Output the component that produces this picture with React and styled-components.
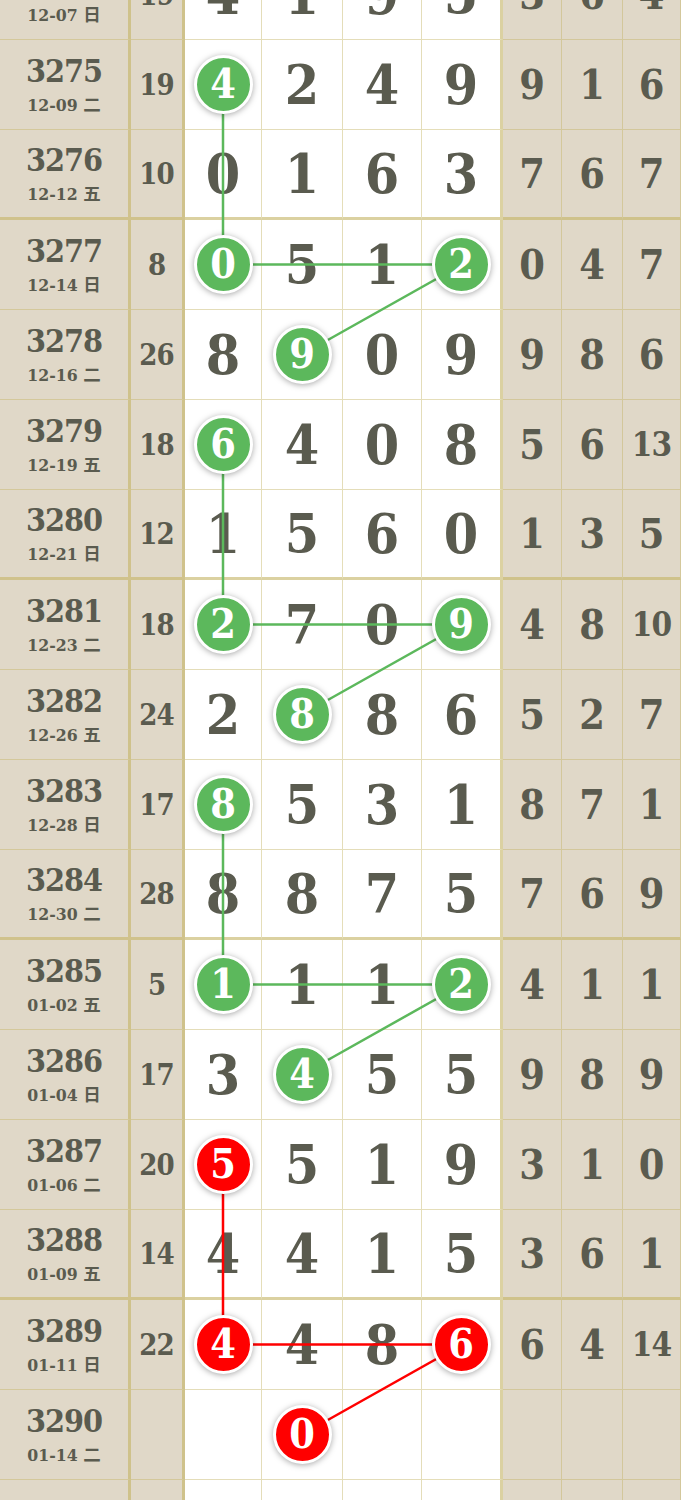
import React from "react";
import styled, {createGlobalStyle} from "styled-components";

const GlobalStyle = createGlobalStyle`
  body {
    margin: 0;
    background: #fff;
    overflow: hidden;
  }
`;

// column widths, border included
const COLS = [131, 54, 77, 81, 79, 81, 59, 61, 58];
const ROW_H = 90;

const rows = [
    {no: "3274", date: "12-07 日", sum: 19, nums: [4, 1, 9, 5], tail: [3, 6, 4]},
    {no: "3275", date: "12-09 二", sum: 19, nums: [4, 2, 4, 9], tail: [9, 1, 6], hit: [0]},
    {no: "3276", date: "12-12 五", sum: 10, nums: [0, 1, 6, 3], tail: [7, 6, 7]},
    {no: "3277", date: "12-14 日", sum: 8, nums: [0, 5, 1, 2], tail: [0, 4, 7], hit: [0, 3]},
    {no: "3278", date: "12-16 二", sum: 26, nums: [8, 9, 0, 9], tail: [9, 8, 6], hit: [1]},
    {no: "3279", date: "12-19 五", sum: 18, nums: [6, 4, 0, 8], tail: [5, 6, 13], hit: [0]},
    {no: "3280", date: "12-21 日", sum: 12, nums: [1, 5, 6, 0], tail: [1, 3, 5]},
    {no: "3281", date: "12-23 二", sum: 18, nums: [2, 7, 0, 9], tail: [4, 8, 10], hit: [0, 3]},
    {no: "3282", date: "12-26 五", sum: 24, nums: [2, 8, 8, 6], tail: [5, 2, 7], hit: [1]},
    {no: "3283", date: "12-28 日", sum: 17, nums: [8, 5, 3, 1], tail: [8, 7, 1], hit: [0]},
    {no: "3284", date: "12-30 二", sum: 28, nums: [8, 8, 7, 5], tail: [7, 6, 9]},
    {no: "3285", date: "01-02 五", sum: 5, nums: [1, 1, 1, 2], tail: [4, 1, 1], hit: [0, 3]},
    {no: "3286", date: "01-04 日", sum: 17, nums: [3, 4, 5, 5], tail: [9, 8, 9], hit: [1]},
    {no: "3287", date: "01-06 二", sum: 20, nums: [5, 5, 1, 9], tail: [3, 1, 0], hit: [0]},
    {no: "3288", date: "01-09 五", sum: 14, nums: [4, 4, 1, 5], tail: [3, 6, 1]},
    {no: "3289", date: "01-11 日", sum: 22, nums: [4, 4, 8, 6], tail: [6, 4, 14], hit: [0, 3]},
    {no: "3290", date: "01-14 二", sum: "", nums: ["", 0, "", ""], tail: ["", "", ""], hit: [1]},
    {no: "", date: "", sum: "", nums: ["", "", "", ""], tail: ["", "", ""]},
];

const LINE = "rgba(196, 180, 100, 0.45)";
const LINE_BOLD = "rgba(196, 180, 100, 0.6)";

const Table = styled.div`
  position: relative;
  margin-top: -50px;
  width: 681px;
  font-family: "DejaVu Serif Condensed", "DejaVu Serif", "Noto Sans CJK SC", serif;
  font-stretch: condensed;
  font-weight: bold;
  color: #5a5b4f;
`;

const Row = styled.div`
  display: grid;
  grid-template-columns: ${COLS.map(w => w + "px").join(" ")};
  height: ${ROW_H}px;
`;

const Cell = styled.div`
  box-sizing: border-box;
  display: flex;
  align-items: center;
  justify-content: center;
  background: ${props => props.$tone === "white" ? "#fff" : "#e0d8c8"};
  border-bottom: ${props => props.$thick ? `3px solid ${LINE_BOLD}` : `1px solid ${LINE}`};
  border-right: ${props => props.$edge ? `3px solid ${LINE_BOLD}` : `1px solid ${LINE}`};
`;

const Period = styled(Cell)`
  flex-direction: column;
`;

const PeriodNo = styled.div`
  font-size: 32px;
  line-height: 36px;
  letter-spacing: -1px;
`;

const PeriodDate = styled.div`
  font-size: 17.5px;
  line-height: 22px;
  margin-top: 5px;
`;

const Sum = styled(Cell)`
  font-size: 29px;
  letter-spacing: -1px;
`;

const Num = styled(Cell)`
  font-size: 55px;
`;

const Tail = styled(Cell)`
  font-size: ${props => props.$small ? "33px" : "41px"};
  letter-spacing: ${props => props.$small ? "-1px" : "0"};
`;

const Ball = styled.span`
  position: relative;
  z-index: 2;
  box-sizing: border-box;
  display: flex;
  align-items: center;
  justify-content: center;
  width: 59px;
  height: 59px;
  border-radius: 50%;
  border: 3px solid #fff;
  background: ${props => props.$red ? "#ff0000" : "#5cb85c"};
  box-shadow: 0 1px 6px rgba(0, 0, 0, 0.35);
  color: #fff;
  font-size: 41px;
  line-height: 1;
`;

const Links = styled.svg`
  position: absolute;
  top: 0;
  left: 0;
  z-index: 1;
  pointer-events: none;
`;

const colCenter = (c) => {
    let x = 0;
    for (let i = 0; i < c; i++) x += COLS[i];
    return x + (COLS[c] - 1) / 2;
};

const isRed = (row) => Number(row.no) >= 3287;

const buildGroups = () => {
    const groups = {};
    rows.forEach((row, r) => {
        if (!row.hit) return;
        const g = Math.floor((r - 1) / 4);
        if (!groups[g]) groups[g] = {red: isRed(row), pts: []};
        row.hit.forEach(c => {
            groups[g].pts.push([colCenter(c + 2), r * ROW_H + 44.5]);
        });
    });
    return Object.values(groups);
};

const App = () => {
    const groups = buildGroups();
    return (
        <>
            <GlobalStyle/>
            <Table>
                {rows.map((row, r) => {
                    const thick = r % 4 === 2;
                    return (
                        <Row key={r}>
                            <Period $thick={thick} $edge>
                                {row.no && <PeriodNo>{row.no}</PeriodNo>}
                                {row.date && <PeriodDate>{row.date}</PeriodDate>}
                            </Period>
                            <Sum $thick={thick} $edge>{row.sum}</Sum>
                            {row.nums.map((n, c) => (
                                <Num key={c} $tone="white" $thick={thick} $edge={c === 3}>
                                    {row.hit && row.hit.includes(c)
                                        ? <Ball $red={isRed(row)}>{n}</Ball>
                                        : n}
                                </Num>
                            ))}
                            {row.tail.map((t, c) => (
                                <Tail key={c} $thick={thick} $small={t >= 10}>{t}</Tail>
                            ))}
                        </Row>
                    );
                })}
                <Links width="681" height={rows.length * ROW_H}>
                    {groups.map((g, i) => (
                        <polyline
                            key={i}
                            points={g.pts.map(p => p.join(",")).join(" ")}
                            fill="none"
                            stroke={g.red ? "#ff0000" : "#5cb85c"}
                            strokeWidth="2.5"
                        />
                    ))}
                </Links>
            </Table>
        </>
    );
};

export default App;
